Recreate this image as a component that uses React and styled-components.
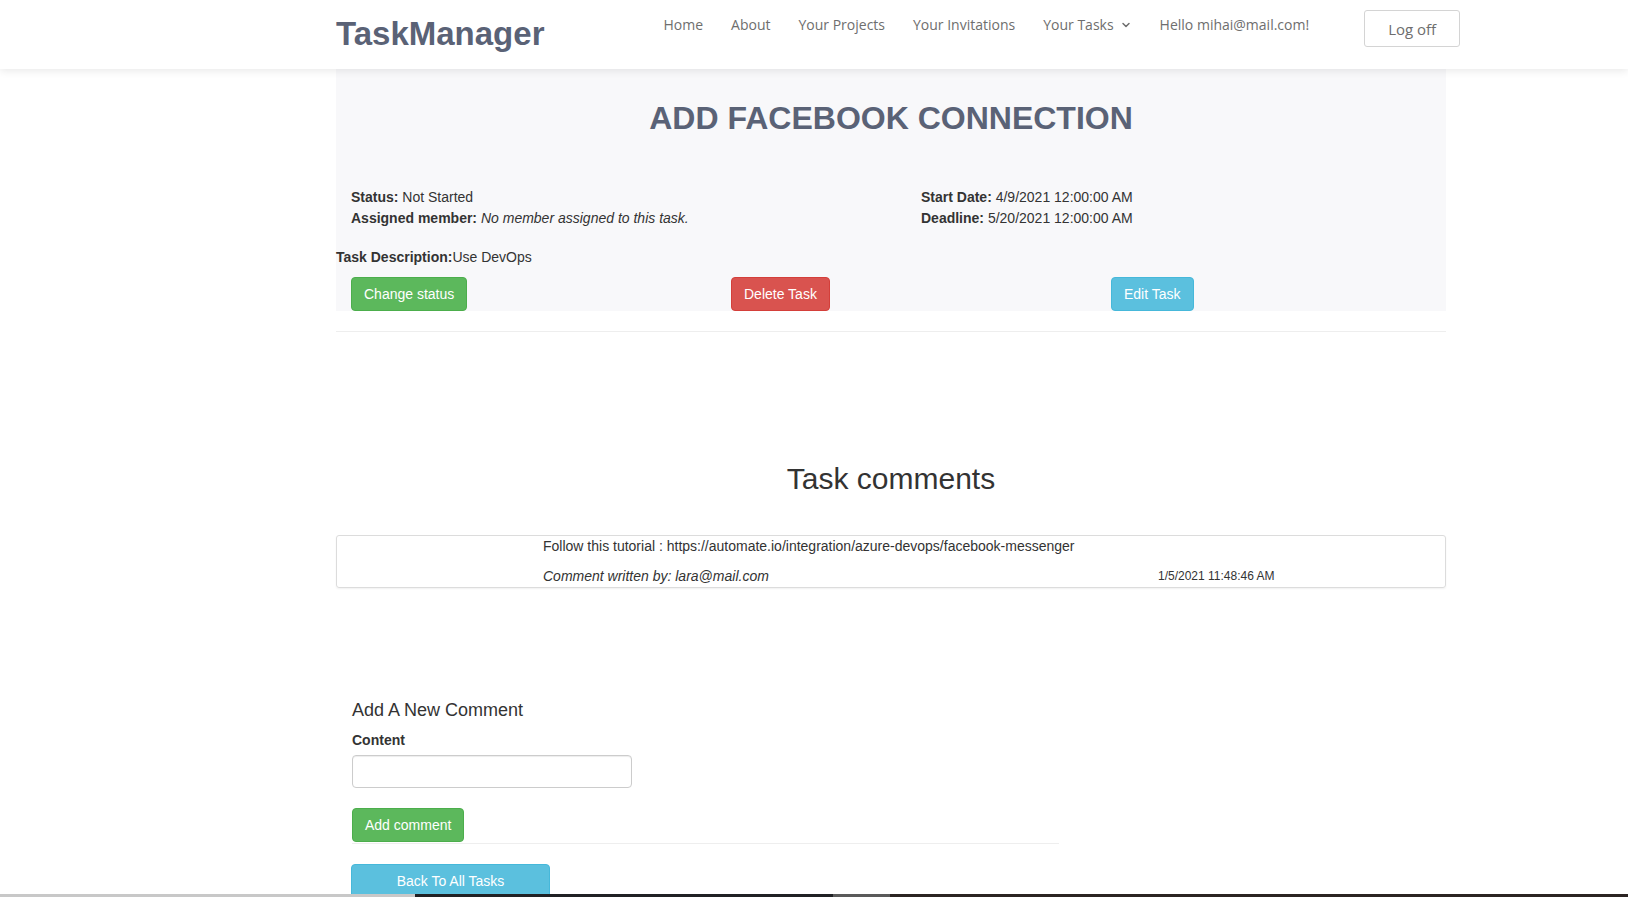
import React from 'react';
import styled, { createGlobalStyle } from 'styled-components';
import { ChevronDown } from 'lucide-react';

const GlobalStyle = createGlobalStyle`
    body {
        margin: 0;
        background: #fff;
        color: #333;
        font-family: "Liberation Sans", Arial, sans-serif;
        font-size: 14px;
        line-height: 1.42857;
    }
`;

const NavBar = styled.header`
    position: relative;
    z-index: 2;
    display: flex;
    align-items: flex-start;
    height: 69px;
    padding-left: 336px;
    background: #fff;
    box-shadow: 0 2px 8px rgba(0, 0, 0, 0.09);
`;

const Brand = styled.div`
    margin-top: 17px;
    margin-right: 119px;
    font-size: 33px;
    line-height: 1;
    font-weight: bold;
    color: #5a6276;
`;

const NavList = styled.nav`
    display: flex;
    align-items: flex-start;
    gap: 28px;
    font-family: "Open Sans", sans-serif;
    font-size: 14px;
    color: #6e6e6e;
`;

const NavItem = styled.span`
    display: inline-flex;
    align-items: center;
    gap: 6px;
    padding-top: 15px;
    line-height: 20px;
`;

const LogOff = styled.button`
    margin-left: 55px;
    margin-top: 10px;
    width: 96px;
    height: 37px;
    font-family: "Open Sans", sans-serif;
    font-size: 15px;
    color: #6e6e6e;
    background: #fff;
    border: 1px solid #d4d4d4;
    border-radius: 3px;
`;

const Main = styled.main`
    width: 1110px;
    margin-left: 336px;
`;

const Panel = styled.section`
    background: #f8f8fa;
    padding-top: 32px;
`;

const Title = styled.h1`
    margin: 0;
    text-align: center;
    font-size: 32px;
    line-height: 1.1;
    font-weight: bold;
    color: #5a6276;
`;

const InfoRow = styled.div`
    display: grid;
    grid-template-columns: 570px 570px;
    margin-top: 51px;
    line-height: 21px;
`;

const InfoCol = styled.div`
    padding-left: 15px;
`;

const Description = styled.div`
    margin-top: 18px;
    line-height: 20px;
`;

const ButtonRow = styled.div`
    display: grid;
    grid-template-columns: repeat(3, 380px);
    margin-top: 10px;
`;

const ButtonCell = styled.div`
    padding-left: 15px;
`;

const colors = {
    success: ['#5cb85c', '#4cae4c'],
    danger: ['#d9534f', '#d43f3a'],
    info: ['#5bc0de', '#46b8da'],
};

const Btn = styled.button`
    display: inline-block;
    padding: 6px 12px;
    width: ${p => p.$width || 'auto'};
    font-family: "Liberation Sans", Arial, sans-serif;
    font-size: 14px;
    line-height: 20px;
    color: #fff;
    background: ${p => colors[p.$kind][0]};
    border: 1px solid ${p => colors[p.$kind][1]};
    border-radius: 4px;
`;

const Rule = styled.hr`
    margin: ${p => p.$margin || '20px 0 0'};
    width: ${p => p.$width || '100%'};
    border: 0;
    border-top: 1px solid #eee;
`;

const SectionTitle = styled.h2`
    margin: 130px 0 0;
    text-align: center;
    font-size: 30px;
    font-weight: normal;
    line-height: 1.1;
    color: #333;
`;

const CommentBox = styled.div`
    margin-top: 40px;
    padding: 1px 0 2px 206px;
    border: 1px solid #dcdcdc;
    border-radius: 3px;
    box-shadow: 0 1px 2px rgba(0, 0, 0, 0.06);
`;

const CommentText = styled.p`
    margin: 0 0 12px;
    line-height: 18px;
`;

const CommentMeta = styled.div`
    display: grid;
    grid-template-columns: 615px auto;
    align-items: center;
    line-height: 18px;
`;

const Author = styled.em``;

const DateText = styled.small`
    font-size: 12px;
`;

const Form = styled.div`
    margin-top: 113px;
    padding-left: 16px;
`;

const FormTitle = styled.h4`
    margin: 0;
    font-size: 18px;
    font-weight: normal;
    line-height: 1.1;
`;

const Label = styled.label`
    display: block;
    margin-top: 9px;
    font-weight: bold;
    line-height: 20px;
`;

const Input = styled.input`
    display: block;
    box-sizing: border-box;
    margin-top: 5px;
    width: 280px;
    height: 33px;
    border: 1px solid #ccc;
    border-radius: 4px;
    box-shadow: inset 0 1px 1px rgba(0, 0, 0, 0.075);
`;

const FormActions = styled.div`
    margin-top: 20px;
`;

const BackWrap = styled.div`
    margin-top: 20px;
    padding-left: 15px;
`;

const BottomBar = styled.div`
    position: fixed;
    left: 0;
    right: 0;
    bottom: 0;
    height: 3px;
    display: grid;
    grid-template-columns: 415px 418px 57px 1fr;
`;

const BarPart = styled.div`
    background: ${p => p.$color};
`;

export default function App() {
    return (
        <>
            <GlobalStyle />
            <NavBar>
                <Brand>TaskManager</Brand>
                <NavList>
                    <NavItem>Home</NavItem>
                    <NavItem>About</NavItem>
                    <NavItem>Your Projects</NavItem>
                    <NavItem>Your Invitations</NavItem>
                    <NavItem>Your Tasks <ChevronDown size={12} strokeWidth={3} /></NavItem>
                    <NavItem>Hello mihai@mail.com!</NavItem>
                </NavList>
                <LogOff>Log off</LogOff>
            </NavBar>

            <Main>
                <Panel>
                    <Title>ADD FACEBOOK CONNECTION</Title>
                    <InfoRow>
                        <InfoCol>
                            <div><b>Status:</b> Not Started</div>
                            <div><b>Assigned member:</b> <i>No member assigned to this task.</i></div>
                        </InfoCol>
                        <InfoCol>
                            <div><b>Start Date:</b> 4/9/2021 12:00:00 AM</div>
                            <div><b>Deadline:</b> 5/20/2021 12:00:00 AM</div>
                        </InfoCol>
                    </InfoRow>
                    <Description><b>Task Description:</b>Use DevOps</Description>
                    <ButtonRow>
                        <ButtonCell><Btn $kind='success'>Change status</Btn></ButtonCell>
                        <ButtonCell><Btn $kind='danger'>Delete Task</Btn></ButtonCell>
                        <ButtonCell><Btn $kind='info'>Edit Task</Btn></ButtonCell>
                    </ButtonRow>
                </Panel>
                <Rule />

                <SectionTitle>Task comments</SectionTitle>
                <CommentBox>
                    <CommentText>Follow this tutorial : https://automate.io/integration/azure-devops/facebook-messenger</CommentText>
                    <CommentMeta>
                        <Author>Comment written by: lara@mail.com</Author>
                        <DateText>1/5/2021 11:48:46 AM</DateText>
                    </CommentMeta>
                </CommentBox>

                <Form>
                    <FormTitle>Add A New Comment</FormTitle>
                    <Label>Content</Label>
                    <Input type='text' />
                    <FormActions>
                        <Btn $kind='success'>Add comment</Btn>
                    </FormActions>
                    <Rule $margin='1px 0 0' $width='707px' />
                </Form>
                <BackWrap>
                    <Btn $kind='info' $width='199px'>Back To All Tasks</Btn>
                </BackWrap>
            </Main>

            <BottomBar>
                <BarPart $color='#c8c8c8' />
                <BarPart $color='#202124' />
                <BarPart $color='#5a5a5a' />
                <BarPart $color='#2b2422' />
            </BottomBar>
        </>
    );
}
